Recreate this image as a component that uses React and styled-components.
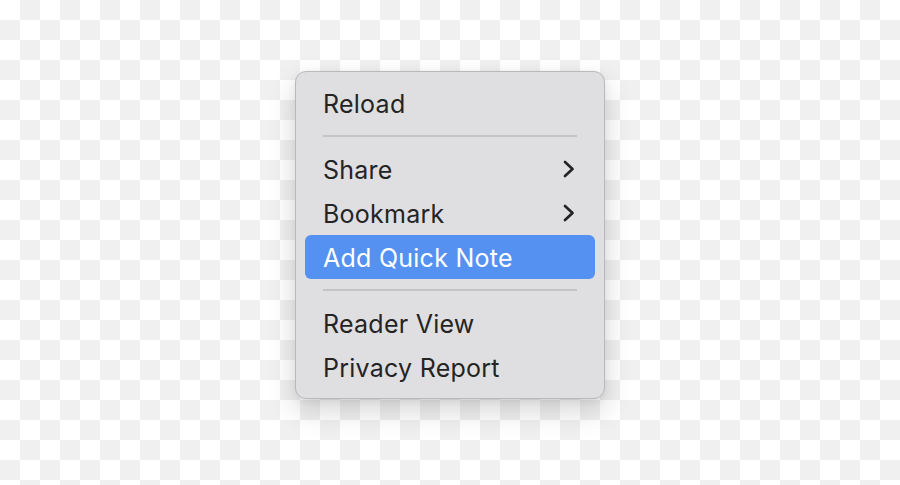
import React from 'react'
import styled, { createGlobalStyle } from 'styled-components'

const GlobalStyle = createGlobalStyle`
  html, body {
    margin: 0;
    padding: 0;
  }
  body {
    background-color: #fff;
    background-image: conic-gradient(#f0f0f0 25%, transparent 0 50%, #f0f0f0 0 75%, transparent 0);
    background-size: 40px 40px;
    font-family: Inter, "Noto Sans", "Liberation Sans", sans-serif;
  }
`

const Page = styled.div`
  width: 900px;
  height: 485px;
  display: flex;
  justify-content: center;
  align-items: flex-start;
  padding-top: 71px;
  box-sizing: border-box;
  overflow: hidden;
`

const Menu = styled.div`
  width: 310px;
  box-sizing: border-box;
  background: #dfdfe1;
  border: 1px solid #b9b9bb;
  border-radius: 11px;
  padding: 9px 8px 9px 8px;
  box-shadow: 0 12px 28px rgba(0, 0, 0, 0.16), 0 2px 8px rgba(0, 0, 0, 0.06);
  display: flex;
  flex-direction: column;
`

const Item = styled.div`
  height: 44px;
  margin: 0 1px;
  padding: 0 20px 0 18px;
  display: flex;
  align-items: center;
  justify-content: space-between;
  border-radius: 6px;
  background: ${(props) => (props.active ? '#5591f1' : 'transparent')};
  color: ${(props) => (props.active ? '#ffffff' : '#242424')};
  font-size: 25px;
  letter-spacing: 0.25px;
`

const Label = styled.span`
  line-height: 1;
  padding-top: 3px;
`

const Separator = styled.div`
  height: 2px;
  margin: 10px 19px;
  background: #c4c4c6;
`

const Chevron = () => (
  <svg width="12" height="18" viewBox="0 0 12 18">
    <path
      d="M2 2 L9.5 9 L2 16"
      fill="none"
      stroke="currentColor"
      strokeWidth="2.7"
      strokeLinecap="round"
      strokeLinejoin="round"
    />
  </svg>
)

const App = () => {
  return (
    <>
      <GlobalStyle />
      <Page>
        <Menu>
          <Item><Label>Reload</Label></Item>
          <Separator />
          <Item><Label>Share</Label><Chevron /></Item>
          <Item><Label>Bookmark</Label><Chevron /></Item>
          <Item active><Label>Add Quick Note</Label></Item>
          <Separator />
          <Item><Label>Reader View</Label></Item>
          <Item><Label>Privacy Report</Label></Item>
        </Menu>
      </Page>
    </>
  )
}

export default App
